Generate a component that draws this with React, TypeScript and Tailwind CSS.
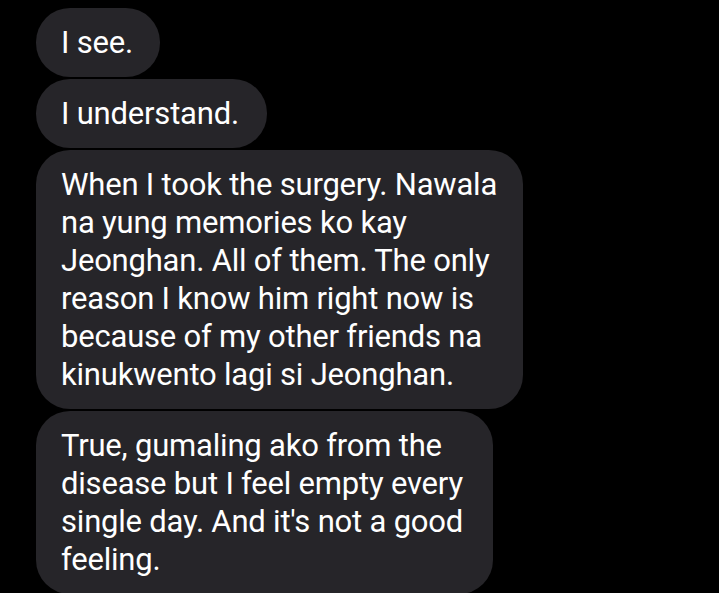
import React from "react";

const cls =
  "rounded-[34px] bg-[#262529] px-[25px] py-[15.5px] text-[31px] leading-[38px] text-white whitespace-nowrap tracking-[-0.2px]";

const Bubble = ({ w, lines }: { w: string; lines: string[] }) => (
  <div className={`${w} ${cls}`}>
    {lines.map((l, i) => (
      <div key={i}>{l}</div>
    ))}
  </div>
);

export default function App() {
  return (
    <div
      className="w-[719px] h-[593px] overflow-hidden bg-black pl-[36px] pt-[8px] flex flex-col gap-[2px]"
      style={{ fontFamily: "Roboto, 'Noto Sans', sans-serif" }}
    >
      <Bubble w="w-[124px]" lines={["I see."]} />
      <Bubble w="w-[231px]" lines={["I understand."]} />
      <Bubble
        w="w-[487px]"
        lines={[
          "When I took the surgery. Nawala",
          "na yung memories ko kay",
          "Jeonghan. All of them. The only",
          "reason I know him right now is",
          "because of my other friends na",
          "kinukwento lagi si Jeonghan.",
        ]}
      />
      <Bubble
        w="w-[457px]"
        lines={[
          "True, gumaling ako from the",
          "disease but I feel empty every",
          "single day. And it's not a good",
          "feeling.",
        ]}
      />
    </div>
  );
}
